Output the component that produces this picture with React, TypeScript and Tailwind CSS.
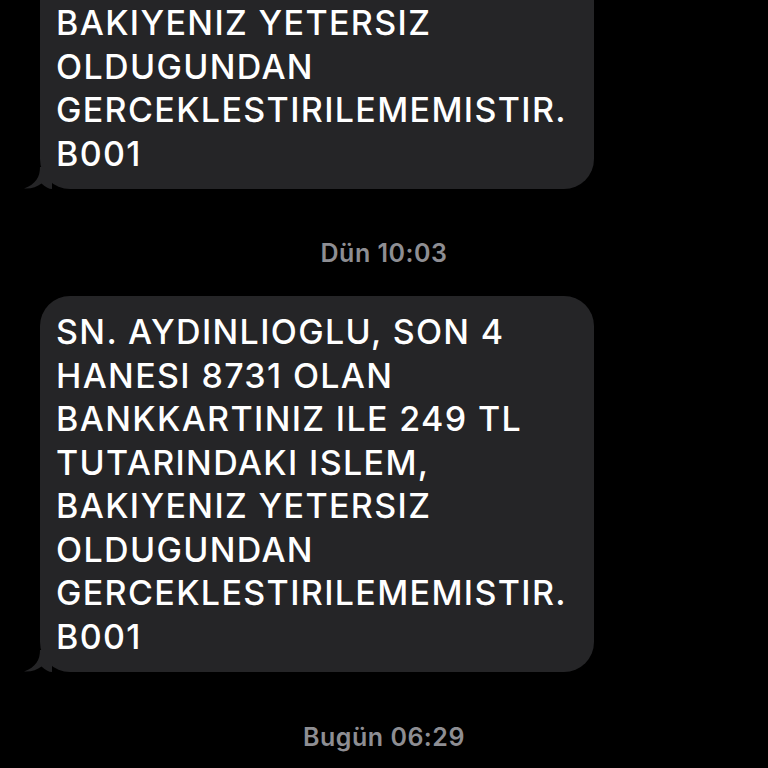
const LINES = [
  "SN. AYDINLIOGLU, SON 4",
  "HANESI 8731 OLAN",
  "BANKKARTINIZ ILE 249 TL",
  "TUTARINDAKI ISLEM,",
  "BAKIYENIZ YETERSIZ",
  "OLDUGUNDAN",
  "GERCEKLESTIRILEMEMISTIR.",
  "B001",
];

function Tail() {
  return (
    <svg
      width="28"
      height="22"
      viewBox="0 0 28 22"
      className="absolute left-[-16px] bottom-0"
      aria-hidden="true"
    >
      <path d="M16 0 C16 10 12 17 0 21.5 C7 22 13 20 17.5 16.5 C21 20 25 22 28 22 L28 0 Z" fill="#252527" />
    </svg>
  );
}

function Bubble() {
  return (
    <div className="relative w-[554px] ml-[40px] rounded-[30px] bg-[#252527] pl-[16px] pr-4 pt-[14px] pb-[14px]">
      <div
        className="text-white text-[34px] leading-[43.5px] font-medium tracking-[1.35px]"
        style={{ fontFamily: "Inter, 'Liberation Sans', sans-serif" }}
      >
        {LINES.map((l) => (
          <div key={l} className="whitespace-nowrap">
            {l}
          </div>
        ))}
      </div>
      <Tail />
    </div>
  );
}

function Stamp({ children }: { children: string }) {
  return (
    <div
      className="flex justify-center text-[#8e8e93] text-[25px] font-semibold leading-[26px] tracking-[0.5px]"
      style={{ fontFamily: "Inter, 'Liberation Sans', sans-serif" }}
    >
      {children}
    </div>
  );
}

export default function App() {
  return (
    <div className="w-[768px] h-[768px] bg-black overflow-hidden">
      <div className="flex flex-col mt-[-187px]">
        <Bubble />
        <div className="h-[51px]" />
        <Stamp>Dün 10:03</Stamp>
        <div className="h-[30px]" />
        <Bubble />
        <div className="h-[52px]" />
        <Stamp>Bugün 06:29</Stamp>
      </div>
    </div>
  );
}
